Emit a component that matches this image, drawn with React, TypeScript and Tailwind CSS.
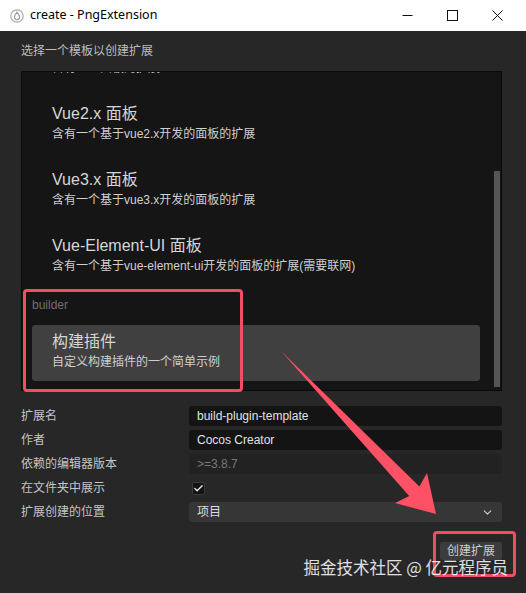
import { Check, ChevronDown } from "lucide-react"

type Template = { title: string; desc: string }

const panels: Template[] = [
  { title: "HTML 面板", desc: "含有一个面板的扩展" },
  { title: "Vue2.x 面板", desc: "含有一个基于vue2.x开发的面板的扩展" },
  { title: "Vue3.x 面板", desc: "含有一个基于vue3.x开发的面板的扩展" },
  { title: "Vue-Element-UI 面板", desc: "含有一个基于vue-element-ui开发的面板的扩展(需要联网)" },
]

const font = "font-['Liberation_Sans','Noto_Sans_CJK_SC',sans-serif]"

function TemplateItem({ item, selected }: { item: Template; selected?: boolean }) {
  return (
    <div className={`mx-[10px] h-[56px] shrink-0 rounded-[3px] pl-[20px] pt-[6px] ${selected ? "bg-[#404040]" : ""}`}>
      <div className="h-[22px] text-[16px] leading-[22px] text-[#d6d6d6]">{item.title}</div>
      <div className="h-[18px] text-[12px] leading-[18px] text-[#cfcfcf]">{item.desc}</div>
    </div>
  )
}

function FormRow({ label, children }: { label: string; children: React.ReactNode }) {
  return (
    <div className="flex h-[20px] items-center">
      <div className="w-[168px] text-[12px] text-[#c4c4c4]">{label}</div>
      <div className="flex h-full flex-1 items-center">{children}</div>
    </div>
  )
}

function TitleBar() {
  return (
    <div className="flex h-[31px] items-center bg-white font-['Noto_Sans',sans-serif]">
      <svg width="14" height="14" viewBox="0 0 14 14" className="ml-[10px]">
        <circle cx="7" cy="7" r="6.2" fill="none" stroke="#a8a8a8" strokeWidth="1.2" />
        <path d="M7 3.2 C8.6 5.2 9.6 6.6 9.6 8 A2.6 2.6 0 0 1 4.4 8 C4.4 6.6 5.4 5.2 7 3.2 Z" fill="none" stroke="#9a9a9a" strokeWidth="1.1" />
      </svg>
      <div className="ml-[6px] flex-1 text-[12.5px] text-black">create - PngExtension</div>
      <div className="mr-[6px] flex h-full">
        <div className="flex w-[45px] items-center justify-center">
          <svg width="11" height="11" viewBox="0 0 11 11"><path d="M0.5 5.5 H10.5" stroke="#111" strokeWidth="1" /></svg>
        </div>
        <div className="flex w-[45px] items-center justify-center">
          <svg width="11" height="11" viewBox="0 0 11 11"><rect x="0.5" y="0.5" width="10" height="10" fill="none" stroke="#111" strokeWidth="1" /></svg>
        </div>
        <div className="flex w-[45px] items-center justify-center">
          <svg width="11" height="11" viewBox="0 0 11 11"><path d="M0.5 0.5 L10.5 10.5 M10.5 0.5 L0.5 10.5" stroke="#111" strokeWidth="1" /></svg>
        </div>
      </div>
    </div>
  )
}

export default function App() {
  return (
    <div className={`relative h-[593px] w-[526px] overflow-hidden bg-[#272727] ${font}`}>
      <TitleBar />

      <div className="flex flex-col pl-[21px] pr-[24px] pt-[11px]">
        <div className="h-[18px] text-[12px] leading-[18px] text-[#bdbdbd]">选择一个模板以创建扩展</div>

        {/* template list, scrolled to the bottom */}
        <div className="mt-[11px] flex h-[320px] overflow-hidden border border-[#0a0a0a] bg-[#151515]">
          <div className="flex-1 overflow-hidden">
            <div className="-mt-[46px] flex flex-col gap-[10px] pt-[5px]">
              {panels.map((p, i) => <TemplateItem key={i} item={p} />)}
              <div className="h-[20px] shrink-0 pl-[10px] text-[12px] leading-[20px] text-[#6f6f6f]">builder</div>
              <TemplateItem item={{ title: "构建插件", desc: "自定义构建插件的一个简单示例" }} selected />
            </div>
          </div>
          <div className="ml-[4px] mr-[1px] flex w-[6px] flex-col justify-end pb-[3px]">
            <div className="h-[216px] bg-[#555555]" />
          </div>
        </div>

        <div className="mt-[15px] flex flex-col gap-[4px]">
          <FormRow label="扩展名">
            <div className="flex h-full w-full items-center rounded-[3px] bg-[#141414] px-[8px] text-[12px] text-[#e2e2e2]">build-plugin-template</div>
          </FormRow>
          <FormRow label="作者">
            <div className="flex h-full w-full items-center rounded-[3px] bg-[#141414] px-[8px] text-[12px] text-[#e2e2e2]">Cocos Creator</div>
          </FormRow>
          <FormRow label="依赖的编辑器版本">
            <div className="flex h-full w-full items-center rounded-[3px] bg-[#222222] px-[8px] text-[12px] text-[#777777]">&gt;=3.8.7</div>
          </FormRow>
          <FormRow label="在文件夹中展示">
            <div className="ml-[3px] flex h-[13px] w-[13px] items-center justify-center rounded-[2px] border border-[#3a3a3a] bg-[#141414]">
              <Check size={11} strokeWidth={3} color="#e6e6e6" />
            </div>
          </FormRow>
          <FormRow label="扩展创建的位置">
            <div className="flex h-full w-full items-center justify-between rounded-[3px] bg-[#363636] pl-[8px] pr-[8px] text-[12px] text-[#dcdcdc]">
              <span>项目</span>
              <ChevronDown size={13} strokeWidth={2} color="#d0d0d0" />
            </div>
          </FormRow>
        </div>

        <div className="mt-[20px] flex justify-end">
          <div className="flex h-[18px] items-center rounded-[2px] bg-[#3c3c3c] px-[7px] text-[12px] text-[#cfcfcf]">创建扩展</div>
        </div>
      </div>

      {/* annotations drawn over the screenshot */}
      <div className="pointer-events-none absolute left-[23px] top-[289px] h-[103px] w-[220px] rounded-[4px] border-[3px] border-[#f24e63]" />
      <div className="pointer-events-none absolute left-[433px] top-[531px] h-[46px] w-[83px] rounded-[4px] border-[3px] border-[#f24e63]" />
      <svg className="pointer-events-none absolute left-0 top-0" width="526" height="593" viewBox="0 0 526 593">
        <path d="M281 351 L419.4 486.4 L427 473 L436 514 L395 503 L409.2 496 Z" fill="#ff5166" />
      </svg>
      <div className="pointer-events-none absolute right-[18px] top-[555px] font-['Noto_Sans_CJK_SC',sans-serif] text-[16.5px] leading-[24px] text-white/85">掘金技术社区 @ 亿元程序员</div>
    </div>
  )
}
